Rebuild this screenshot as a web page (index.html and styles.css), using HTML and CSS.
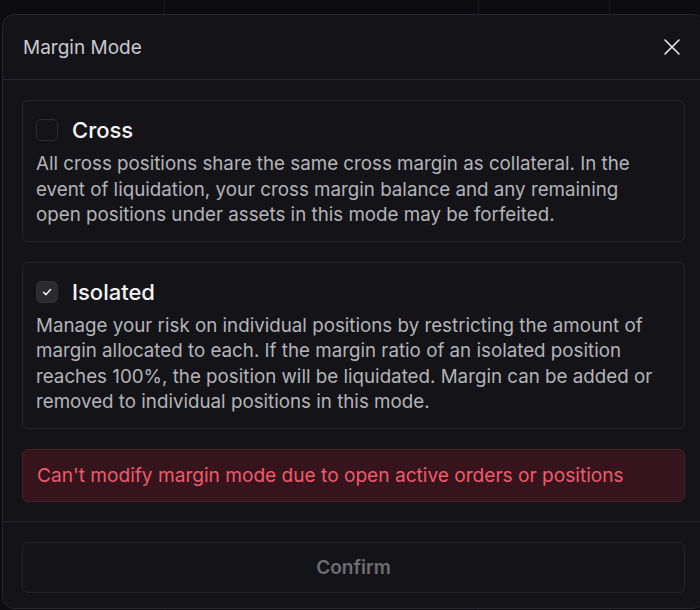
FILE: index.html
```html
<!DOCTYPE html>
<html>
<head>
<meta charset="utf-8">
<link rel="stylesheet" href="styles.css">
</head>
<body>
<div class="backdrop">
  <div class="modal">
    <div class="modal-header">
      <span class="modal-title">Margin Mode</span>
      <button class="close-btn" aria-label="Close">
        <svg width="18" height="18" viewBox="0 0 18 18" fill="none" stroke="#e8e8ea" stroke-width="1.6" stroke-linecap="round"><path d="M2 2 L16 16 M16 2 L2 16"/></svg>
      </button>
    </div>
    <div class="modal-body">
      <div class="option">
        <div class="option-head">
          <span class="checkbox"></span>
          <span class="option-title">Cross</span>
        </div>
        <p class="option-desc">All cross positions share the same cross margin as collateral. In the event of liquidation, your cross margin balance and any remaining open positions under assets in this mode may be forfeited.</p>
      </div>
      <div class="option">
        <div class="option-head">
          <span class="checkbox checked">
            <svg width="12" height="12" viewBox="0 0 12 12" fill="none" stroke="#f2f2f4" stroke-width="1.5" stroke-linecap="round" stroke-linejoin="round"><path d="M2.5 6.3 L5 8.6 L9.6 3.6"/></svg>
          </span>
          <span class="option-title">Isolated</span>
        </div>
        <p class="option-desc">Manage your risk on individual positions by restricting the amount of margin allocated to each. If the margin ratio of an isolated position reaches 100%, the position will be liquidated. Margin can be added or removed to individual positions in this mode.</p>
      </div>
      <div class="alert">Can't modify margin mode due to open active orders or positions</div>
    </div>
    <div class="modal-footer">
      <button class="confirm-btn" disabled>Confirm</button>
    </div>
  </div>
</div>
</body>
</html>
```
FILE: styles.css
```css
html, body {
  margin: 0;
  padding: 0;
  width: 700px;
  height: 610px;
  overflow: hidden;
  background: #0c0c10;
  font-family: Inter, "Noto Sans", sans-serif;
}
.backdrop {
  width: 700px;
  height: 610px;
  overflow: hidden;
  background-color: #0c0c10;
  background-image:
    linear-gradient(to right, transparent 164px, #1a1a20 164px, #1a1a20 165px, transparent 165px),
    linear-gradient(to right, transparent 478px, #1a1a20 478px, #1a1a20 479px, transparent 479px),
    linear-gradient(to right, transparent 609px, #1a1a20 609px, #1a1a20 610px, transparent 610px);
  padding-top: 14px;
  box-sizing: border-box;
}
.modal {
  margin-left: 2px;
  width: 703px;
  height: 595px;
  box-sizing: border-box;
  background: #141418;
  border: 1px solid #26262c;
  border-radius: 12px;
  display: flex;
  flex-direction: column;
}
.modal-header {
  height: 64px;
  border-bottom: 1px solid #26262c;
  display: flex;
  align-items: center;
  justify-content: space-between;
  padding: 0 23px 0 20px;
}
.modal-title {
  font-size: 19px;
  color: #c9c9cd;
  font-weight: 400;
}
.close-btn {
  background: none;
  border: 0;
  padding: 0;
  width: 18px;
  height: 18px;
  display: flex;
}
.modal-body {
  padding: 20px 19px 19px;
  display: flex;
  flex-direction: column;
  gap: 20px;
  border-bottom: 1px solid #26262c;
}
.option {
  border: 1px solid #26262c;
  border-radius: 6px;
  padding: 17px 18px 13px 13px;
}
.option-head {
  display: flex;
  align-items: center;
  gap: 14px;
}
.checkbox {
  width: 22px;
  height: 22px;
  box-sizing: border-box;
  border: 1px solid #2c2c32;
  border-radius: 5px;
  display: flex;
  align-items: center;
  justify-content: center;
}
.checkbox.checked {
  background: #2a2a2f;
  border-color: #2f2f35;
}
.option-title {
  font-size: 22px;
  font-weight: 500;
  color: #f4f4f6;
  line-height: 24px;
}
.option-desc {
  margin: 9px 0 0;
  font-size: 18.75px;
  line-height: 25.5px;
  color: #b3b3b8;
}
.alert {
  height: 53px;
  box-sizing: border-box;
  background: #35151b;
  border: 1px solid #45202a;
  border-radius: 6px;
  display: flex;
  align-items: center;
  padding: 0 14px;
  color: #ef5a6c;
  font-size: 19.1px;
}
.modal-footer {
  padding: 20px 19px 0;
}
.confirm-btn {
  width: 100%;
  height: 51px;
  background: transparent;
  border: 1px solid #24242a;
  border-radius: 6px;
  color: #6d6d73;
  font-family: Inter, "Noto Sans", sans-serif;
  font-size: 19px;
  font-weight: 600;
}
```
